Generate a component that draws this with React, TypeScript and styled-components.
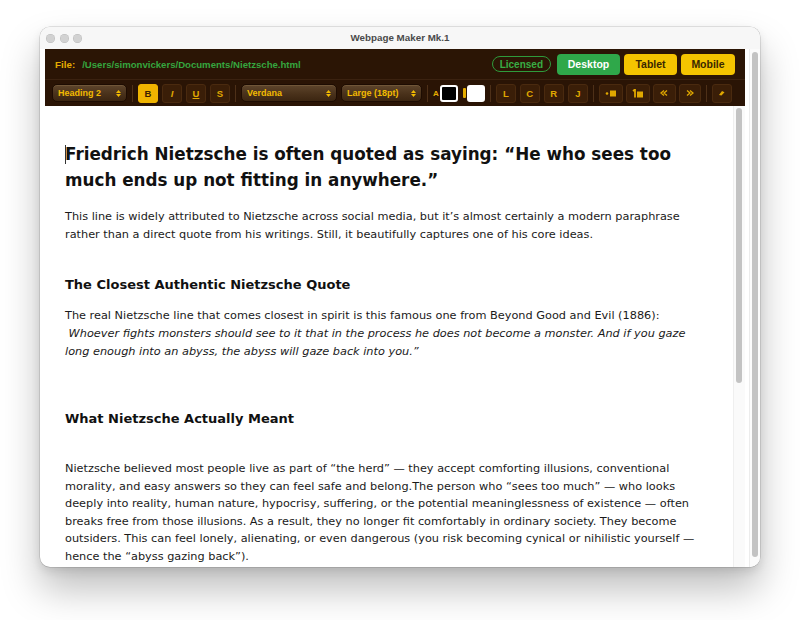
import styled, { createGlobalStyle } from 'styled-components'

const GlobalStyle = createGlobalStyle`
    html, body {
        margin: 0;
        padding: 0;
        background: #ffffff;
    }
    body {
        width: 800px;
        height: 620px;
        overflow: hidden;
    }
`

const YELLOW = '#e6ad00'
const DARK = '#2b1505'

const Stage = styled.div`
    width: 800px;
    height: 620px;
    box-sizing: border-box;
    padding: 27px 40px 0 40px;
    font-family: 'Liberation Sans', Arial, sans-serif;
`

const Window = styled.div`
    width: 720px;
    height: 540px;
    border-radius: 10px;
    background: #ffffff;
    overflow: hidden;
    display: flex;
    flex-direction: column;
    box-shadow: 0 0 0 0.5px rgba(0, 0, 0, 0.2), 0 22px 38px rgba(0, 0, 0, 0.26),
        0 4px 10px rgba(0, 0, 0, 0.1);
`

const TitleBar = styled.div`
    flex: 0 0 22px;
    display: grid;
    grid-template-columns: 90px 1fr 90px;
    align-items: center;
    padding: 0 6px;
    background: #f7f7f7;
`

const Lights = styled.div`
    display: flex;
    gap: 4.5px;
`

const Light = styled.span`
    width: 9px;
    height: 9px;
    border-radius: 50%;
    background: #d2d2d2;
    box-shadow: inset 0 0 0 0.5px rgba(0, 0, 0, 0.12);
`

const Title = styled.div`
    text-align: center;
    font-size: 9.8px;
    font-weight: 700;
    color: #4a4a4a;
    padding-bottom: 1px;
`

const Body = styled.div`
    flex: 1;
    display: flex;
    min-height: 0;
`

const Main = styled.div`
    flex: 1;
    min-width: 0;
    display: flex;
    flex-direction: column;
    padding: 0 4px 0 5px;
`

const OuterTrack = styled.div`
    width: 11px;
    box-sizing: border-box;
    border-left: 1px solid #ececec;
    background: #fbfbfb;
    padding: 3px 2px 10px 2px;
    display: flex;
`

const Thumb = styled.div<{ $h: number }>`
    width: 6px;
    border-radius: 3px;
    background: #c3c3c3;
    height: ${({ $h }) => $h}px;
`

const Header = styled.div`
    background: ${DARK};
    display: flex;
    flex-direction: column;
`

const FileRow = styled.div`
    height: 30px;
    display: flex;
    align-items: center;
    padding: 0 10px 0 10px;
    gap: 7px;
`

const FileLabel = styled.span`
    color: ${YELLOW};
    font-weight: 700;
    font-size: 9.8px;
`

const FilePath = styled.span`
    color: #35a63f;
    font-weight: 700;
    font-size: 9.6px;
    flex: 1;
`

const Licensed = styled.span`
    height: 16px;
    box-sizing: border-box;
    border: 1.5px solid #2f9a3b;
    border-radius: 9px;
    padding: 0 7px;
    display: flex;
    align-items: center;
    color: #39ad44;
    font-weight: 700;
    font-size: 10px;
    margin-right: -1px;
`

const ModeButton = styled.button<{ $active?: boolean; $w: number }>`
    width: ${({ $w }) => $w}px;
    height: 21px;
    border: none;
    border-radius: 4px;
    font-family: 'Liberation Sans', Arial, sans-serif;
    font-weight: 700;
    font-size: 10.5px;
    padding: 0;
    background: ${({ $active }) => ($active ? '#2fa84a' : '#f5c400')};
    color: ${({ $active }) => ($active ? '#ffffff' : '#3a2700')};
`

const ToolRow = styled.div`
    height: 27px;
    display: flex;
    align-items: center;
    padding: 0 0 0 7px;
    border-top: 1px solid #3b2210;
    box-sizing: border-box;
    background: #2a1405;
`

const Group = styled.div<{ $gap: number }>`
    display: flex;
    align-items: center;
    gap: ${({ $gap }) => $gap}px;
`

const Sep = styled.span`
    width: 1px;
    height: 17px;
    background: #4e3018;
    margin: 0 5px;
`

const Select = styled.div<{ $w: number }>`
    width: ${({ $w }) => $w}px;
    height: 18px;
    box-sizing: border-box;
    border-radius: 5px;
    border: 1px solid #1d0c02;
    background: linear-gradient(#5e452c, #4a321b 55%, #3b2511);
    box-shadow: inset 0 1px 0 rgba(255, 220, 160, 0.12);
    display: flex;
    align-items: center;
    justify-content: space-between;
    padding: 0 5px 0 5px;
    color: #f2bb00;
    font-weight: 700;
    font-size: 9px;
`

const Arrows = styled.span`
    display: flex;
    flex-direction: column;
    align-items: center;
    gap: 1px;
`

const Tool = styled.button<{ $active?: boolean; $w?: number }>`
    width: ${({ $w }) => $w ?? 20}px;
    height: 19px;
    box-sizing: border-box;
    border-radius: 3px;
    border: 1px solid ${({ $active }) => ($active ? '#f0b400' : '#4a2a0f')};
    background: ${({ $active }) => ($active ? '#f0b400' : '#3a1e08')};
    color: ${({ $active }) => ($active ? '#3a2000' : '#e0a800')};
    font-family: 'Liberation Sans', Arial, sans-serif;
    font-weight: 900;
    font-size: 9.5px;
    padding: 0;
    display: flex;
    align-items: center;
    justify-content: center;
`

const SwatchLabel = styled.span`
    color: ${YELLOW};
    font-weight: 700;
    font-size: 8px;
    margin-right: 1px;
`

const HiBar = styled.span`
    width: 3px;
    height: 10px;
    background: ${YELLOW};
    border-radius: 1px;
    margin: 0 1px 0 5px;
`

const Swatch = styled.span<{ $fill: string }>`
    width: 18px;
    height: 17px;
    box-sizing: border-box;
    border-radius: 3px;
    border: 2px solid #ffffff;
    background: ${({ $fill }) => $fill};
`

const Editor = styled.div`
    flex: 1;
    min-height: 0;
    display: flex;
`

const Content = styled.div`
    flex: 1;
    padding: 35px 25px 0 20px;
    overflow: hidden;
    font-family: Verdana, 'DejaVu Sans', sans-serif;
    color: #111111;
`

const H1 = styled.h1`
    position: relative;
    margin: 0;
    font-size: 16.8px;
    line-height: 26px;
    font-weight: 700;
`

const Caret = styled.span`
    position: absolute;
    left: 0;
    top: 4px;
    width: 1px;
    height: 19px;
    background: #333;
`

const H2 = styled.h2<{ $mt: number }>`
    margin: ${({ $mt }) => $mt}px 0 0 0;
    font-size: 13px;
    line-height: 18px;
    font-weight: 700;
`

const P = styled.p<{ $mt: number; $lh?: number }>`
    margin: ${({ $mt }) => $mt}px 0 0 0;
    font-size: 11.3px;
    line-height: ${({ $lh }) => $lh ?? 18}px;
    color: #1a1a1a;
`

const InnerTrack = styled.div`
    width: 12px;
    box-sizing: border-box;
    border-left: 1px solid #efefef;
    background: #fafafa;
    padding: 2px 0 0 2px;
`

const UpDown = () => (
    <Arrows>
        <svg width="5" height="3" viewBox="0 0 5 3">
            <path d="M0 3 L2.5 0 L5 3 Z" fill="#f2bb00" />
        </svg>
        <svg width="5" height="3" viewBox="0 0 5 3">
            <path d="M0 0 L2.5 3 L5 0 Z" fill="#f2bb00" />
        </svg>
    </Arrows>
)

const BulletIcon = () => (
    <svg width="12" height="8" viewBox="0 0 12 8">
        <circle cx="2" cy="4.5" r="1.3" fill="#e0a800" />
        <rect x="5" y="1.5" width="6" height="6" fill="#e0a800" />
    </svg>
)

const NumberIcon = () => (
    <svg width="12" height="9" viewBox="0 0 12 9">
        <path d="M1 2 L3 0.5 L3 8.5" stroke="#e0a800" strokeWidth="1.8" fill="none" />
        <rect x="5" y="2.5" width="6" height="6" fill="#e0a800" />
    </svg>
)

const ChevIcon = ({ dir }: { dir: 'l' | 'r' }) => (
    <svg width="8" height="6" viewBox="0 0 8 6">
        {dir === 'l' ? (
            <path d="M4 0.5 L1 3 L4 5.5 M7 0.5 L4 3 L7 5.5" stroke="#e0a800" strokeWidth="1.3" fill="none" />
        ) : (
            <path d="M1 0.5 L4 3 L1 5.5 M4 0.5 L7 3 L4 5.5" stroke="#e0a800" strokeWidth="1.3" fill="none" />
        )}
    </svg>
)

const EraseIcon = () => (
    <svg width="7" height="6" viewBox="0 0 7 6">
        <path d="M1 5 L4 1 L6.5 2.2 L3.5 5.6 Z" fill="#e0a800" />
    </svg>
)

const App = () => {
    return (
        <Stage>
            <GlobalStyle />
            <Window>
                <TitleBar>
                    <Lights>
                        <Light />
                        <Light />
                        <Light />
                    </Lights>
                    <Title>Webpage Maker Mk.1</Title>
                    <span />
                </TitleBar>
                <Body>
                    <Main>
                        <Header>
                            <FileRow>
                                <FileLabel>File:</FileLabel>
                                <FilePath>/Users/simonvickers/Documents/Nietzsche.html</FilePath>
                                <Licensed>Licensed</Licensed>
                                <Group $gap={4}>
                                    <ModeButton $active $w={63}>
                                        Desktop
                                    </ModeButton>
                                    <ModeButton $w={53}>Tablet</ModeButton>
                                    <ModeButton $w={54}>Mobile</ModeButton>
                                </Group>
                            </FileRow>
                            <ToolRow>
                                <Select $w={75}>
                                    Heading 2 <UpDown />
                                </Select>
                                <Sep />
                                <Group $gap={4}>
                                    <Tool $active>B</Tool>
                                    <Tool>
                                        <i>I</i>
                                    </Tool>
                                    <Tool>
                                        <u>U</u>
                                    </Tool>
                                    <Tool>S</Tool>
                                </Group>
                                <Sep />
                                <Group $gap={4}>
                                    <Select $w={96}>
                                        Verdana <UpDown />
                                    </Select>
                                    <Select $w={81}>
                                        Large (18pt) <UpDown />
                                    </Select>
                                </Group>
                                <Sep />
                                <Group $gap={0}>
                                    <SwatchLabel>A</SwatchLabel>
                                    <Swatch $fill="#000000" />
                                    <HiBar />
                                    <Swatch $fill="#ffffff" />
                                </Group>
                                <Sep />
                                <Group $gap={4}>
                                    <Tool>L</Tool>
                                    <Tool>C</Tool>
                                    <Tool>R</Tool>
                                    <Tool>J</Tool>
                                </Group>
                                <Sep />
                                <Group $gap={3}>
                                    <Tool $w={24}>
                                        <BulletIcon />
                                    </Tool>
                                    <Tool $w={24}>
                                        <NumberIcon />
                                    </Tool>
                                    <Tool $w={23}>
                                        <ChevIcon dir="l" />
                                    </Tool>
                                    <Tool $w={22}>
                                        <ChevIcon dir="r" />
                                    </Tool>
                                </Group>
                                <Sep />
                                <Tool>
                                    <EraseIcon />
                                </Tool>
                            </ToolRow>
                        </Header>
                        <Editor>
                            <Content>
                                <H1>
                                    <Caret />
                                    Friedrich Nietzsche is often quoted as saying: “He who sees too much
                                    ends up not fitting in anywhere.”
                                </H1>
                                <P $mt={15}>
                                    This line is widely attributed to Nietzsche across social media, but
                                    it’s almost certainly a modern paraphrase rather than a direct quote
                                    from his writings. Still, it beautifully captures one of his core ideas.
                                </P>
                                <H2 $mt={32}>The Closest Authentic Nietzsche Quote</H2>
                                <P $mt={13}>
                                    The real Nietzsche line that comes closest in spirit is this famous one
                                    from Beyond Good and Evil (1886):
                                    <br />
                                    <i>
                                        &nbsp;Whoever fights monsters should see to it that in the process he
                                        does not become a monster. And if you gaze long enough into an abyss,
                                        the abyss will gaze back into you.”
                                    </i>
                                </P>
                                <H2 $mt={49}>What Nietzsche Actually Meant</H2>
                                <P $mt={32} $lh={17.6}>
                                    Nietzsche believed most people live as part of “the herd” — they accept
                                    comforting illusions, conventional morality, and easy answers so they
                                    can feel safe and belong.The person who “sees too much” — who looks
                                    deeply into reality, human nature, hypocrisy, suffering, or the
                                    potential meaninglessness of existence — often breaks free from those
                                    illusions. As a result, they no longer fit comfortably in ordinary
                                    society. They become outsiders. This can feel lonely, alienating, or
                                    even dangerous (you risk becoming cynical or nihilistic yourself —
                                    hence the “abyss gazing back”).
                                </P>
                            </Content>
                            <InnerTrack>
                                <Thumb $h={275} />
                            </InnerTrack>
                        </Editor>
                    </Main>
                    <OuterTrack>
                        <Thumb $h={505} />
                    </OuterTrack>
                </Body>
            </Window>
        </Stage>
    )
}

export default App
